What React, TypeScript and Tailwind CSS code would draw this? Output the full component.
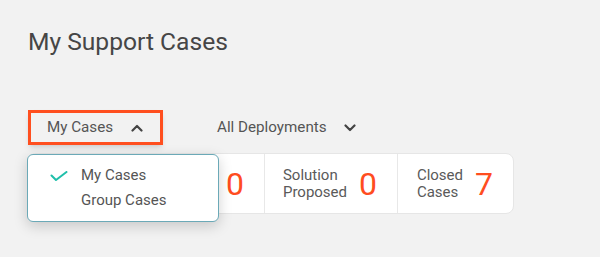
import { useState } from "react";

type Stat = { label: string[]; value: number | null; width: string };

// the first two cells sit under the open dropdown, so they carry no label here
const stats: Stat[] = [
  { label: [], value: null, width: "w-[109px]" },
  { label: [], value: 0, width: "w-[127px]" },
  { label: ["Solution", "Proposed"], value: 0, width: "w-[133px]" },
  { label: ["Closed", "Cases"], value: 7, width: "w-[115px]" },
];

function Chevron({ up }: { up?: boolean }) {
  return (
    <svg width="12" height="8" viewBox="0 0 12 8" className="shrink-0">
      <polyline
        points={up ? "1.5,6.5 6,2 10.5,6.5" : "1.5,1.5 6,6 10.5,1.5"}
        fill="none"
        stroke="#444"
        strokeWidth="2.2"
        strokeLinecap="round"
        strokeLinejoin="round"
      />
    </svg>
  );
}

export default function App() {
  const [open, setOpen] = useState(true);
  const [scope, setScope] = useState("My Cases");

  return (
    <div className="h-[257px] w-full bg-[#f2f2f2] px-[28px] font-['Roboto',sans-serif] overflow-hidden">
      <h1 className="pt-[26px] text-[24.6px] leading-8 text-[#464646]">
        My Support Cases
      </h1>

      <div className="relative mt-[52px] flex items-center">
        <button
          onClick={() => setOpen(!open)}
          className="flex h-[35px] w-[135px] items-center gap-[18px] border-[3px] border-[#ff4f1f] pl-4 text-[15.2px] text-[#555] shadow-md"
        >
          {scope}
          <Chevron up={open} />
        </button>
        <button className="ml-[35px] flex h-[35px] items-center gap-[17px] border-[3px] border-transparent pl-4 text-[15.2px] text-[#555]">
          All Deployments
          <Chevron />
        </button>

        {open && (
          <div className="absolute left-[-1px] top-[44px] z-10 w-[192px] rounded-md border border-[#6ba9b7] bg-white py-2 shadow-[0_4px_14px_rgba(0,0,0,0.18)]">
            {["My Cases", "Group Cases"].map((item) => (
              <div
                key={item}
                onClick={() => {
                  setScope(item);
                  setOpen(false);
                }}
                className="flex items-center text-[15px] leading-[25px] text-[#555] cursor-pointer"
              >
                <span className="flex w-[53px] justify-end pr-[13px]">
                  {scope === item && (
                    <svg width="18" height="10" viewBox="0 0 18 10">
                      <polyline
                        points="1.5,4.5 6,9 16.5,1"
                        fill="none"
                        stroke="#1fbfaa"
                        strokeWidth="2"
                        strokeLinecap="round"
                        strokeLinejoin="round"
                      />
                    </svg>
                  )}
                </span>
                {item}
              </div>
            ))}
          </div>
        )}
      </div>

      <div className="mt-[8px] flex h-[61px] w-fit divide-x divide-[#e8e8e8] rounded-lg border border-[#e6e6e6] bg-white">
        {stats.map((s, i) => (
          <div
            key={i}
            className={`flex items-center justify-end gap-3 pr-5 ${s.width}`}
          >
            {s.label.length > 0 && (
              <div className="text-[15px] leading-[17px] text-[#5a5a5a]">
                {s.label.map((l) => (
                  <div key={l}>{l}</div>
                ))}
              </div>
            )}
            {s.value !== null && (
              <div className="text-[32px] leading-none text-[#ff4d1f]">
                {s.value}
              </div>
            )}
          </div>
        ))}
      </div>
    </div>
  );
}
